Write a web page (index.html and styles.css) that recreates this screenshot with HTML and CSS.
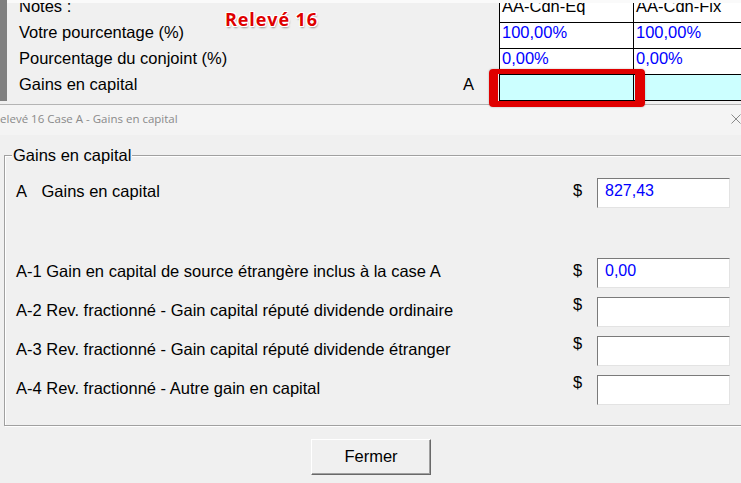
FILE: index.html
```html
<!DOCTYPE html>
<html lang="fr">
<head>
<meta charset="utf-8">
<title>Relevé 16 Case A</title>
<link rel="stylesheet" href="styles.css">
</head>
<body>
<div class="screen">
  <section class="sheet">
    <div class="sidebar"></div>
    <div class="table-area">
      <div class="clip">
        <div class="rows">
          <div class="row">
            <div class="label">Notes :</div>
            <div class="cell">AA-Cdn-Eq</div>
            <div class="cell">AA-Cdn-Fix</div>
          </div>
          <div class="row">
            <div class="label">Votre pourcentage (%)</div>
            <div class="cell value">100,00%</div>
            <div class="cell value">100,00%</div>
          </div>
          <div class="row">
            <div class="label">Pourcentage du conjoint (%)</div>
            <div class="cell value">0,00%</div>
            <div class="cell value">0,00%</div>
          </div>
          <div class="row">
            <div class="label split"><span>Gains en capital</span><span class="key">A</span></div>
            <div class="cell cyan"></div>
            <div class="cell cyan"></div>
          </div>
        </div>
      </div>
    </div>
  </section>

  <div class="stamp">Relevé 16</div>
  <div class="highlight"></div>

  <section class="dialog">
    <header class="titlebar">
      <span class="title">Relevé 16 Case A - Gains en capital</span>
      <svg class="close" width="10" height="10" viewBox="0 0 10 10" aria-hidden="true">
        <path d="M0.5 0.5 L9.5 9.5 M9.5 0.5 L0.5 9.5" stroke="#8a8a8a" stroke-width="1" fill="none"/>
      </svg>
    </header>
    <div class="dialog-body">
      <fieldset class="group">
        <legend>Gains en capital</legend>
        <div class="field">
          <label class="field-label"><span class="letter">A</span>Gains en capital</label>
          <span class="dollar">$</span>
          <div class="input">827,43</div>
        </div>
        <div class="field far">
          <label class="field-label">A-1 Gain en capital de source étrangère inclus à la case A</label>
          <span class="dollar">$</span>
          <div class="input">0,00</div>
        </div>
        <div class="field">
          <label class="field-label">A-2 Rev. fractionné - Gain capital réputé dividende ordinaire</label>
          <span class="dollar raised">$</span>
          <div class="input"></div>
        </div>
        <div class="field">
          <label class="field-label">A-3 Rev. fractionné - Gain capital réputé dividende étranger</label>
          <span class="dollar raised">$</span>
          <div class="input"></div>
        </div>
        <div class="field">
          <label class="field-label">A-4 Rev. fractionné - Autre gain en capital</label>
          <span class="dollar raised">$</span>
          <div class="input"></div>
        </div>
      </fieldset>
      <div class="actions">
        <button class="btn" type="button">Fermer</button>
      </div>
    </div>
  </section>
</div>
</body>
</html>
```
FILE: styles.css
```css
* { box-sizing: border-box; }
html, body { margin: 0; padding: 0; }
body {
  width: 741px;
  height: 483px;
  overflow: hidden;
  background: #f0f0f0;
  font-family: "Liberation Sans", Arial, sans-serif;
  font-size: 16.5px;
  color: #000;
}
.screen { position: relative; height: 483px; }

/* ---------- background sheet ---------- */
.sheet { display: flex; height: 104px; background: #f0f0f0; }
.sidebar { flex: none; width: 7px; height: 101px; background: #808080; }
.table-area { flex: 1; border-top: 3px solid #fafafa; height: 104px; }
.clip { height: 101px; overflow: hidden; }
.rows { margin-top: -6px; }
.row {
  display: grid;
  grid-template-columns: 492px 134px 1fr;
  height: 26px;
}
.label { padding-left: 12px; line-height: 18px; white-space: nowrap; }
.label.split { display: flex; justify-content: space-between; padding-right: 25px; }
.cell {
  background: #fff;
  border-left: 1px solid #000;
  border-bottom: 1px solid #000;
  padding-left: 2px;
  line-height: 18px;
  white-space: nowrap;
}
.cell.value { color: #0000ff; }
.cell.cyan { background: #ccffff; }

.stamp {
  position: absolute;
  left: 225px;
  top: 9px;
  font-family: "Open Sans", "DejaVu Sans", sans-serif;
  font-weight: 700;
  font-size: 18px;
  letter-spacing: 0.9px;
  line-height: 20px;
  color: #df0000;
  text-shadow: 1px 0 0 #fff, -1px 0 0 #fff, 0 1px 0 #fff, 0 -1px 0 #fff,
               1px 1px 0 #fff, -1px -1px 0 #fff, 1px -1px 0 #fff, -1px 1px 0 #fff,
               1px 2px 2px rgba(0,0,0,0.4);
}
.highlight {
  position: absolute;
  left: 489px;
  top: 69px;
  width: 156px;
  height: 38px;
  border-style: solid;
  border-color: #e00000;
  border-width: 5px 10px 6px 9px;
  border-radius: 4px;
  box-shadow: 0 0 2px rgba(0,0,0,0.3);
  z-index: 2;
}

/* ---------- dialog ---------- */
.dialog { border-top: 1px solid #b4b4b4; }
.titlebar {
  display: flex;
  align-items: flex-start;
  height: 30px;
  background: #f4f4f4;
  padding-top: 7px;
}
.title {
  margin-left: -7px;
  font-family: "Open Sans", "Noto Sans", sans-serif;
  font-size: 11.5px;
  line-height: 14px;
  color: #8a8a8a;
  white-space: nowrap;
}
.close { margin-left: auto; margin-top: 2px; margin-right: 0; flex: none; }

.dialog-body { background: #f0f0f0; }
.group {
  margin: 11px -10px 0 4px;
  padding: 14px 0 20px 7px;
  border: 1px solid #a0a0a0;
  box-shadow: inset 1px 1px 0 #fff, 1px 1px 0 #fff;
  min-width: 0;
}
.group legend {
  padding: 0 1px;
  line-height: 18px;
  background: #f0f0f0;
}
.field { display: flex; height: 30px; padding-left: 4px; }
.field + .field { margin-top: 9px; }
.field.far { margin-top: 50px; }
.field-label {
  flex: none;
  width: 557px;
  padding-top: 3px;
  line-height: 20px;
  white-space: nowrap;
}
.letter { display: inline-block; width: 25.5px; }
.dollar { flex: none; width: 24px; padding-top: 2px; line-height: 20px; }
.dollar.raised { padding-top: 0; margin-top: -3px; }
.input {
  flex: none;
  width: 133px;
  height: 30px;
  background: #fff;
  border: 1px solid;
  border-color: #7a7a7a #e3e3e3 #e3e3e3 #7a7a7a;
  padding: 2px 0 0 7px;
  font-size: 16px;
  line-height: 20px;
  color: #0000ff;
}
.actions { display: flex; justify-content: center; padding-top: 13px; }
.btn {
  width: 120px;
  height: 36px;
  margin-left: 1px;
  background: #f0f0f0;
  border: 1px solid;
  border-color: #fff #696969 #696969 #fff;
  box-shadow: inset -1px -1px 0 #a0a0a0;
  font-family: "Liberation Sans", Arial, sans-serif;
  font-size: 16.5px;
  color: #000;
  padding: 0 0 2px;
}
```
